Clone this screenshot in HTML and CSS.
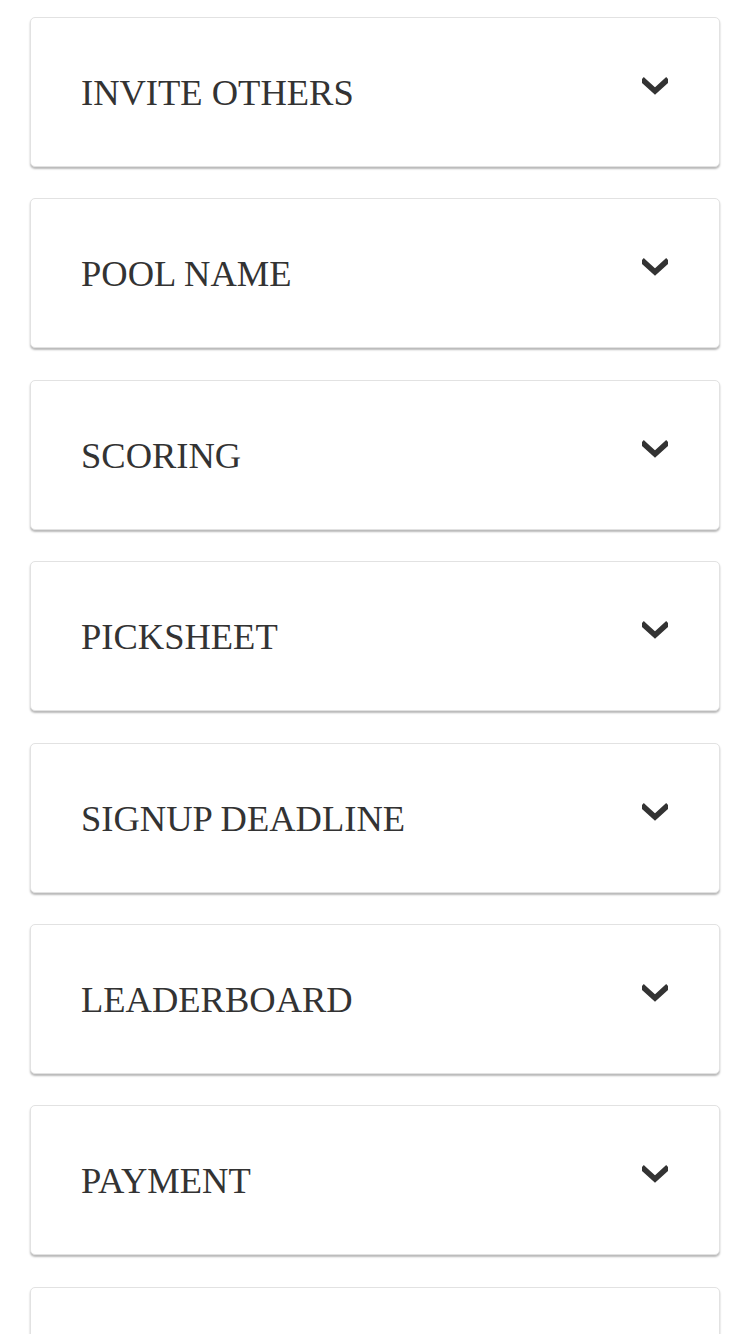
FILE: index.html
```html
<!DOCTYPE html>
<html>
<head>
<meta charset="utf-8">
<link rel="stylesheet" href="styles.css">
</head>
<body>
<div class="list">
  <div class="card"><span class="title">INVITE OTHERS</span><svg class="chev" viewBox="0 0 26 19"><path d="M2 5 L13 15 L24 5" /></svg></div>
  <div class="card"><span class="title">POOL NAME</span><svg class="chev" viewBox="0 0 26 19"><path d="M2 5 L13 15 L24 5" /></svg></div>
  <div class="card"><span class="title">SCORING</span><svg class="chev" viewBox="0 0 26 19"><path d="M2 5 L13 15 L24 5" /></svg></div>
  <div class="card"><span class="title">PICKSHEET</span><svg class="chev" viewBox="0 0 26 19"><path d="M2 5 L13 15 L24 5" /></svg></div>
  <div class="card"><span class="title">SIGNUP DEADLINE</span><svg class="chev" viewBox="0 0 26 19"><path d="M2 5 L13 15 L24 5" /></svg></div>
  <div class="card"><span class="title">LEADERBOARD</span><svg class="chev" viewBox="0 0 26 19"><path d="M2 5 L13 15 L24 5" /></svg></div>
  <div class="card"><span class="title">PAYMENT</span><svg class="chev" viewBox="0 0 26 19"><path d="M2 5 L13 15 L24 5" /></svg></div>
  <div class="card"><span class="title">&nbsp;</span></div>
</div>
</body>
</html>
```
FILE: styles.css
```css
html, body {
  margin: 0;
  padding: 0;
  background: #fff;
  overflow: hidden;
  height: 1334px;
}
.list {
  display: flex;
  flex-direction: column;
  gap: 31.4px;
  padding: 17px 30px 0 30px;
}
.card {
  box-sizing: border-box;
  height: 150px;
  border: 1px solid #e2e2e2;
  border-radius: 5px;
  box-shadow: 0 2px 2px rgba(0, 0, 0, 0.28);
  background: #fff;
  display: flex;
  justify-content: space-between;
  align-items: flex-start;
  padding: 53px 51px 0 50px;
  flex-shrink: 0;
}
.title {
  font-family: "Liberation Serif", "Times New Roman", serif;
  font-size: 36.5px;
  line-height: 43px;
  color: #333;
}
.chev {
  width: 26px;
  height: 19px;
  margin-top: 5px;
  fill: none;
  stroke: #333;
  stroke-width: 5.5;
  stroke-linecap: square;
  stroke-linejoin: miter;
}
```
